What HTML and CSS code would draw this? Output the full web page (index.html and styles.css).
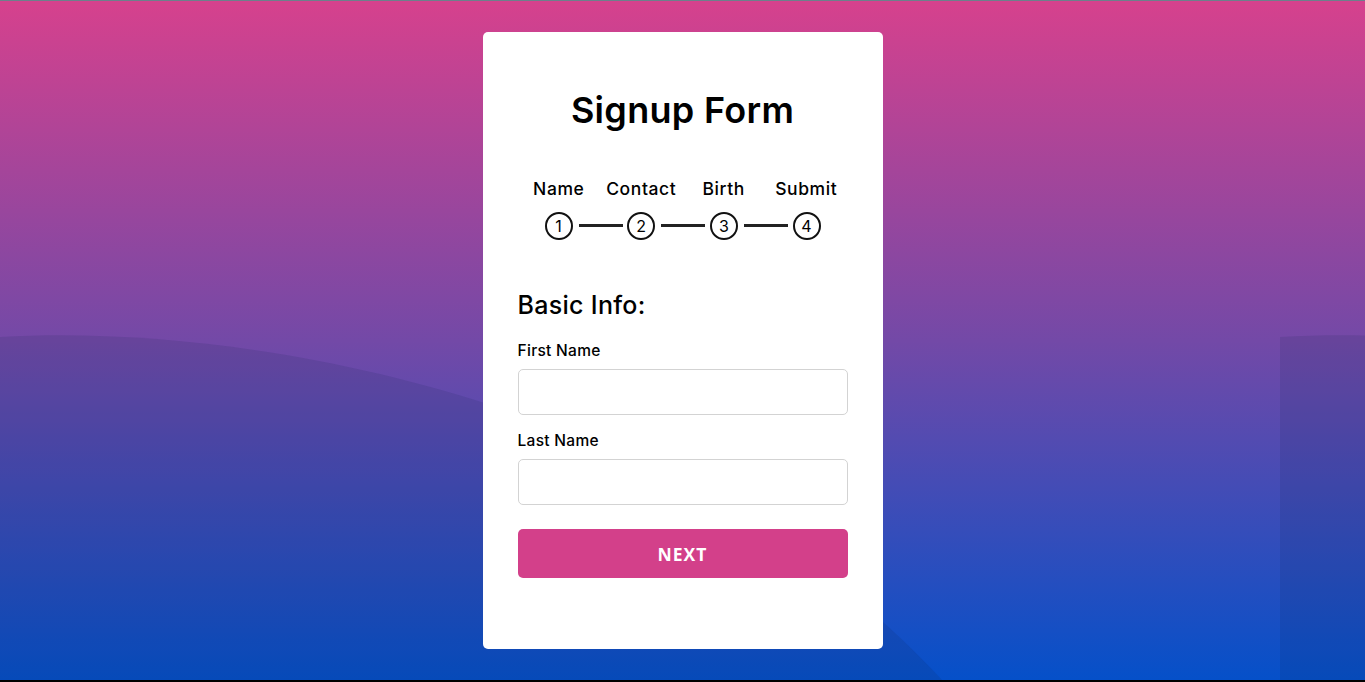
FILE: index.html
```html
<!DOCTYPE html>
<html lang="en">
<head>
<meta charset="utf-8">
<title>Signup Form</title>
<link rel="stylesheet" href="styles.css">
</head>
<body>
<div class="page">
  <svg class="waves" width="1365" height="682" viewBox="0 0 1365 682" aria-hidden="true">
    <path class="wave" d="M0,337 C250,322 700,400 960,700 L0,700 Z"/>
    <path class="wave" d="M1280,337 C1530,322 1980,400 2240,700 L1280,700 Z"/>
  </svg>
  <main class="card">
    <h1 class="title">Signup Form</h1>
    <div class="steps">
      <div class="labels">
        <span class="label">Name</span>
        <span class="label">Contact</span>
        <span class="label">Birth</span>
        <span class="label">Submit</span>
      </div>
      <div class="track">
        <span class="bullet">1</span>
        <span class="connector"></span>
        <span class="bullet">2</span>
        <span class="connector"></span>
        <span class="bullet">3</span>
        <span class="connector"></span>
        <span class="bullet">4</span>
      </div>
    </div>
    <form class="form">
      <h2 class="section">Basic Info:</h2>
      <label class="field-label" for="first">First Name</label>
      <input class="field" id="first" type="text">
      <label class="field-label" for="last">Last Name</label>
      <input class="field" id="last" type="text">
      <button class="next" type="button">NEXT</button>
    </form>
  </main>
</div>
</body>
</html>
```

FILE: styles.css
```css
* { box-sizing: border-box; }

html, body {
  margin: 0;
  padding: 0;
  height: 100%;
}

body {
  font-family: "Inter", "Open Sans", sans-serif;
  color: #000;
  background: #000;
  overflow: hidden;
}

.page {
  position: relative;
  height: 680px;
  border-top: 1px solid #6c7f8b;
  background: linear-gradient(180deg, #d6418d 0%, #7349a7 50%, #0550c9 100%);
  display: flex;
  justify-content: center;
  align-items: flex-start;
  overflow: hidden;
}

.waves {
  position: absolute;
  left: 0;
  top: -1px;
}

.wave {
  fill: rgba(20, 30, 70, 0.12);
}

.card {
  position: relative;
  width: 400px;
  height: 617px;
  margin-top: 31px;
  padding: 58px 35px 0;
  background: #fff;
  border-radius: 5px;
}

.title {
  margin: 0;
  font-size: 36px;
  line-height: 40px;
  font-weight: 600;
  text-align: center;
  letter-spacing: 0.3px;
}

.steps {
  margin-top: 48px;
}

.labels {
  display: grid;
  grid-template-columns: repeat(4, 1fr);
}

.label {
  text-align: center;
  font-size: 17.5px;
  line-height: 22px;
  font-weight: 500;
  letter-spacing: 0.6px;
  white-space: nowrap;
}

.track {
  display: flex;
  align-items: center;
  padding: 0 27px;
  margin-top: 12px;
}

.bullet {
  flex: none;
  width: 28px;
  height: 28px;
  border: 2px solid #111;
  border-radius: 50%;
  display: flex;
  align-items: center;
  justify-content: center;
  font-size: 16px;
  font-weight: 400;
  line-height: 1;
}

.connector {
  flex: 1;
  height: 3px;
  margin: 0 4.5px 0 6px;
  background: #222;
  transform: translateY(-1px);
}

.form {
  display: flex;
  flex-direction: column;
  margin-top: 50px;
}

.section {
  margin: 0;
  font-size: 25px;
  line-height: 30px;
  font-weight: 500;
  letter-spacing: 0.3px;
}

.field-label {
  margin-top: 21px;
  font-size: 15.5px;
  line-height: 20px;
  font-weight: 500;
  letter-spacing: 0.3px;
}

.field {
  margin-top: 8px;
  height: 46px;
  width: 100%;
  border: 1px solid #d3d3d3;
  border-radius: 5px;
  font: inherit;
  padding: 0 14px;
}

.field + .field-label {
  margin-top: 16px;
}

.next {
  margin-top: 24px;
  height: 49px;
  width: 100%;
  border: none;
  border-radius: 5px;
  background: #d3408a;
  color: #fff;
  font-family: "Open Sans", sans-serif;
  font-weight: 700;
  font-size: 17.5px;
  letter-spacing: 1px;
  cursor: pointer;
}
```
